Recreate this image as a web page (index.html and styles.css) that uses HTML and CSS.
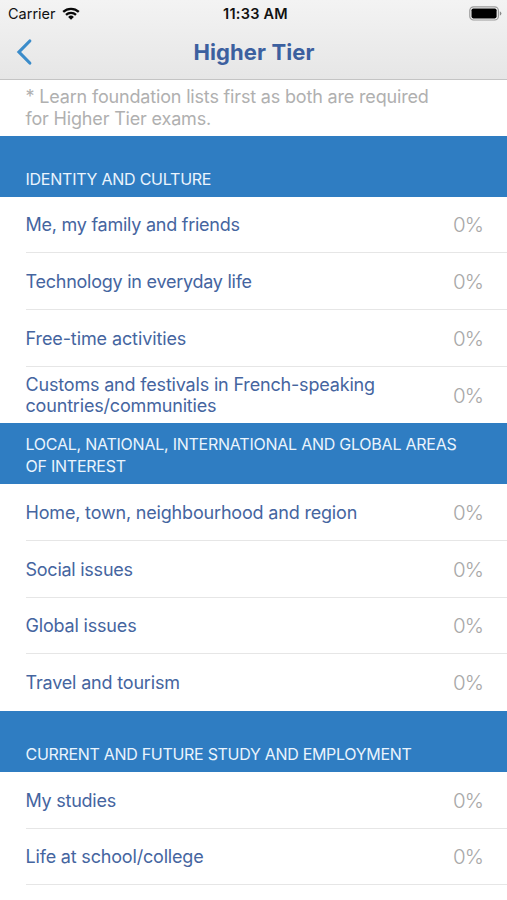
FILE: index.html
```html
<!DOCTYPE html>
<html lang="en">
<head>
<meta charset="utf-8">
<title>Higher Tier</title>
<link rel="stylesheet" href="styles.css">
</head>
<body>
<header class="top">
  <div class="status">
    <div class="carrier"><span class="t carrier-name">Carrier</span>
      <svg class="wifi" width="18" height="13" viewBox="0 0 18 13"><path d="M1.2 4.9a11.4 11.4 0 0 1 15.6 0M4 7.9a7.3 7.3 0 0 1 10 0" fill="none" stroke="#080808" stroke-width="2.3"/><path d="M9 12.8 6.1 9.9a4.2 4.2 0 0 1 5.8 0z" fill="#080808"/></svg>
    </div>
    <span class="t clock">11:33 AM</span>
    <svg class="battery" width="33" height="15" viewBox="0 0 33 15"><rect x=".8" y=".8" width="28.6" height="13.2" rx="3.8" fill="#f4f4f4" stroke="#9a9a9a" stroke-width="1.2"/><rect x="2.5" y="2.4" width="25.1" height="10" rx="1.8" fill="#000"/><path d="M30.8 5.2q1.6.7 1.6 2.3t-1.6 2.3z" fill="#888"/></svg>
  </div>
  <nav class="nav">
    <svg class="back" width="18" height="28" viewBox="0 0 18 28"><path d="M14.8 3 4 14 14.8 25" fill="none" stroke="#3b8cca" stroke-width="3.2" stroke-linecap="round"/></svg>
    <h1 class="title t">Higher Tier</h1>
  </nav>
</header>
<main>
  <p class="note"><span class="t">* Learn foundation lists first as both are required</span><br><span class="t">for Higher Tier exams.</span></p>
  <h2 class="section"><span class="t">IDENTITY AND CULTURE</span></h2>
  <ul class="list">
    <li class="row"><span class="t snug">Me, my family and friends</span><span class="pct">0%</span></li>
    <li class="row"><span class="t snug">Technology in everyday life</span><span class="pct">0%</span></li>
    <li class="row"><span class="t loose">Free-time activities</span><span class="pct">0%</span></li>
    <li class="row"><span class="t">Customs and festivals in French-speaking<br>countries/communities</span><span class="pct">0%</span></li>
  </ul>
  <h2 class="section"><span class="t">LOCAL, NATIONAL, INTERNATIONAL AND GLOBAL AREAS<br>OF INTEREST</span></h2>
  <ul class="list">
    <li class="row"><span class="t">Home, town, neighbourhood and region</span><span class="pct">0%</span></li>
    <li class="row"><span class="t snug">Social issues</span><span class="pct">0%</span></li>
    <li class="row"><span class="t">Global issues</span><span class="pct">0%</span></li>
    <li class="row"><span class="t">Travel and tourism</span><span class="pct">0%</span></li>
  </ul>
  <h2 class="section"><span class="t snug-caps">CURRENT AND FUTURE STUDY AND EMPLOYMENT</span></h2>
  <ul class="list">
    <li class="row"><span class="t snug">My studies</span><span class="pct">0%</span></li>
    <li class="row more"><span class="t">Life at school/college</span><span class="pct">0%</span></li>
  </ul>
</main>
</body>
</html>
```
FILE: styles.css
```css
* { box-sizing: border-box; }
body { margin: 0; height: 900px; overflow: hidden; background: #fff; font-family: Inter, sans-serif; }
.t { white-space: nowrap; }
.top { height: 80px; background: linear-gradient(#f3f3f3, #e6e6e6); border-bottom: 1px solid #c4c4c4; }
.status { height: 27px; padding: 0 5px 0 8px; display: grid; grid-template-columns: 1fr auto 1fr; align-items: center; font-size: 14.5px; color: #111; }
.carrier { display: flex; align-items: center; gap: 7px; }
.wifi { margin-left: -1px; }
.clock { padding-left: 1px; font-weight: 600; letter-spacing: 0.25px; }
.battery { justify-self: end; }
.nav { height: 50px; padding: 0 14px 0 15px; display: grid; grid-template-columns: 1fr auto 1fr; align-items: center; }
.title { margin: 0; font-size: 22px; font-weight: 700; letter-spacing: 0.1px; color: #3c609f; }
.note { margin: 0; height: 55.5px; padding: 6px 25.5px 0; font-size: 18px; line-height: 21.5px; letter-spacing: -0.17px; color: #b0b0b0; }
.section { margin: 0; height: 61.3px; padding: 0 25.5px 7.2px; display: flex; align-items: flex-end; background: #2f7dc2; color: #eaf4fd; font-size: 16px; line-height: 22px; font-weight: 400; letter-spacing: -0.24px; }
.list { margin: 0; padding: 0 0 0 25.5px; list-style: none; }
.row { height: 56.6px; padding: 1px 24px 0 0; display: flex; align-items: center; justify-content: space-between; border-bottom: 1px solid #e6e6e6; font-size: 18px; line-height: 21.5px; letter-spacing: -0.18px; color: #45659f; }
.row:last-child:not(.more) { border-bottom: 0; }
.snug { letter-spacing: -0.25px; }
.loose { letter-spacing: -0.1px; }
.snug-caps { letter-spacing: -0.3px; }
.pct { font-size: 20.5px; font-weight: 350; letter-spacing: -0.9px; color: #a8a8a8; }
```
